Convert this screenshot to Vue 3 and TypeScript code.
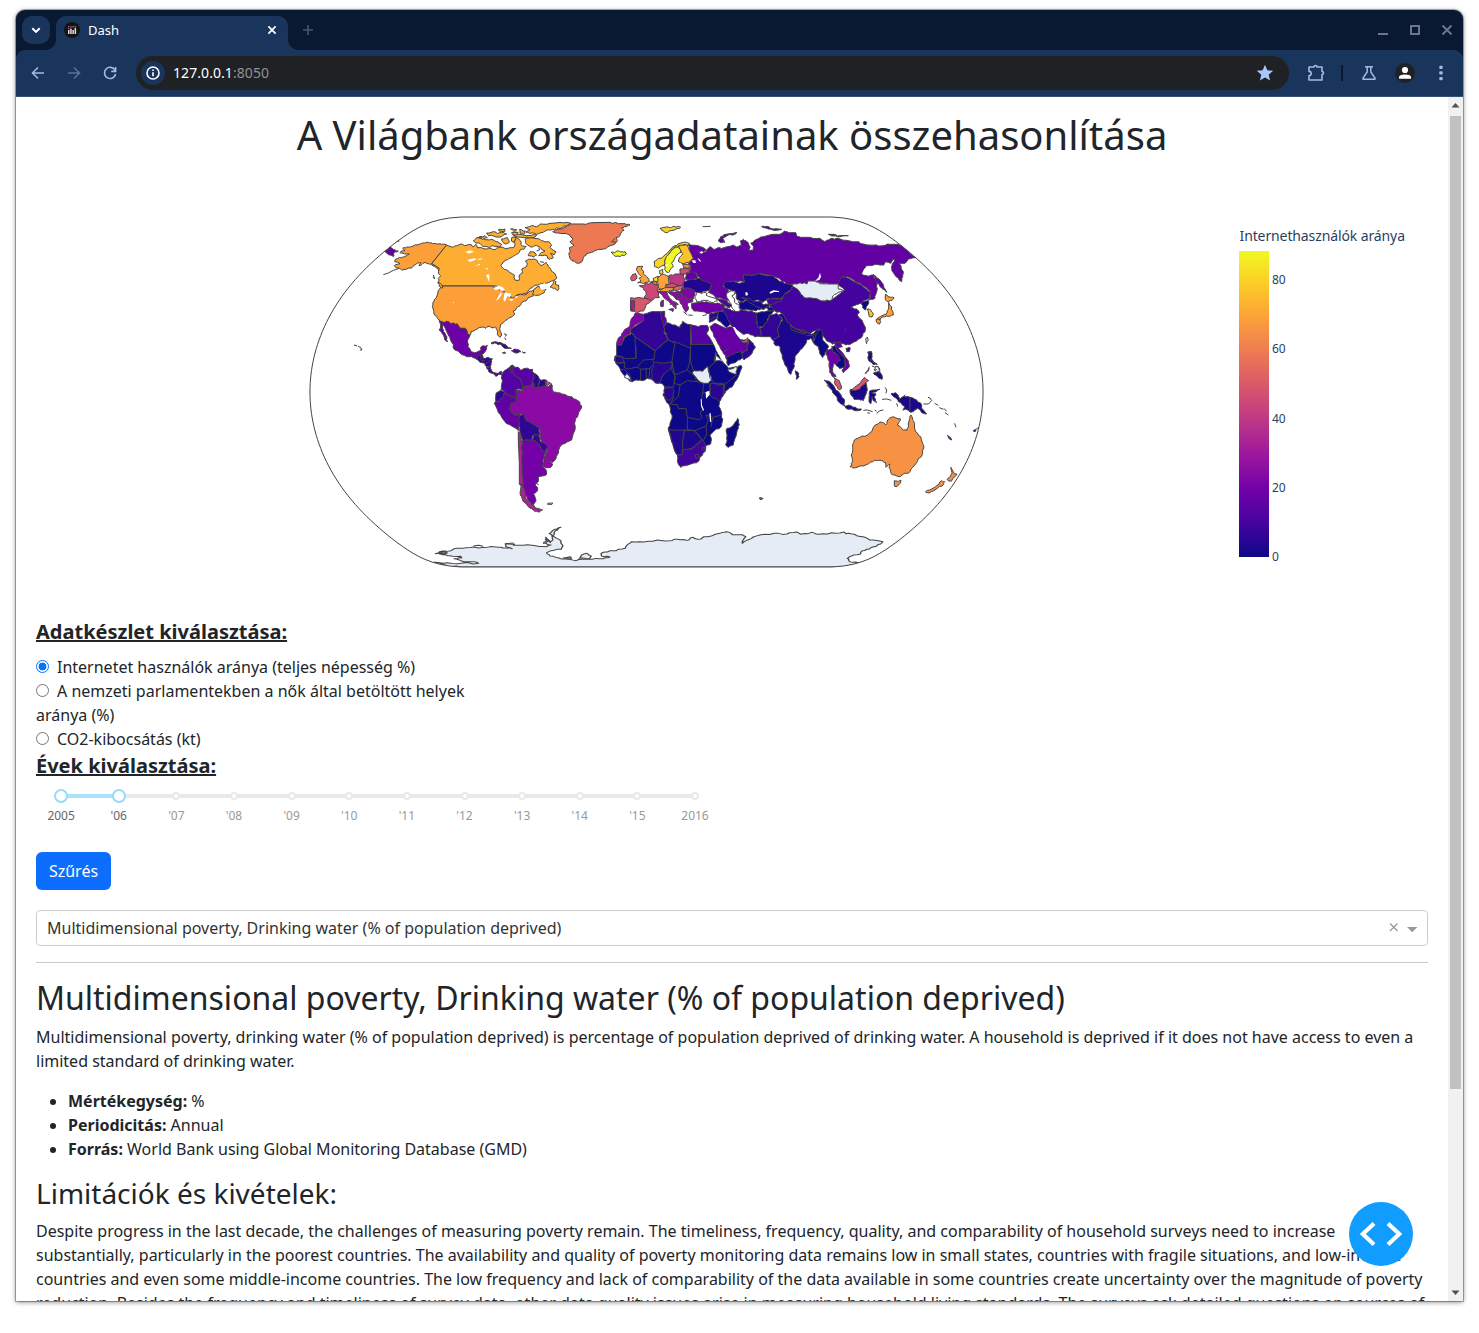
<script setup lang="ts">
interface Shape {
  f: string
  p: string
}
interface Layer {
  t: string
  shapes: Shape[]
  lines?: string[]
  water?: string[]
}

const NONE = '#e5ecf6'
const DARK = '#0d0887'

const americas: Layer = {
  t: 'translate(370 205) scale(.33333)',
  shapes: [
    { f: '#6200a4', p: '45,138 55,132 60,125 70,133 85,138 72,143 70,155 60,150 50,145' },
    { f: '#fc9f39', p: '230,120 185,176 194,180 208,186 210,200 203,192 195,184 182,178 165,172 156,178 147,182 153,173 140,176 130,184 110,192 96,196 88,190 78,188 73,182 90,176 84,172 74,170 76,163 95,158 105,154 118,147 104,147 90,143 93,139 105,137 98,130 110,126 122,125 133,121 145,118 158,114 175,112 188,116 200,117 215,118' },
    { f: '#fdae32', p: '230,120 245,126 260,122 275,117 288,122 300,118 310,125 318,118 322,128 335,128 348,132 360,130 372,134 385,128 397,126 405,131 415,130 430,128 436,120 431,110 440,98 447,103 452,108 455,122 468,124 462,133 450,135 445,145 436,150 428,155 415,162 405,166 398,174 393,182 400,190 412,196 425,205 433,210 432,218 436,226 447,226 448,210 457,204 455,192 468,186 472,178 466,168 475,163 488,162 500,165 505,175 513,182 522,178 528,172 535,185 545,198 557,210 560,220 545,228 530,234 515,236 497,240 480,250 470,265 455,269 440,270 428,280 415,272 405,262 400,250 365,243 215,243 208,236 205,220 212,212 205,205 208,190 194,180 185,176' },
    { f: '#fc9f39', p: '215,243 365,243 385,250 400,258 410,270 428,280 445,270 470,268 482,258 492,255 489,268 490,273 476,277 468,288 455,292 450,302 440,308 436,316 430,318 434,328 425,336 412,344 400,352 391,360 390,375 395,390 390,397 382,388 381,374 376,366 366,368 358,364 347,370 338,366 326,368 315,375 303,380 300,392 292,386 285,370 272,370 262,357 245,356 235,350 220,352 207,345 200,334 192,328 187,305 192,288 201,272 210,250' },
    { f: '#fdae32', p: '500,246 508,244 512,252 528,253 523,263 512,268 497,272 488,266 492,254' },
    { f: '#fdae32', p: '540,246 549,236 553,227 558,230 556,238 565,240 567,250 563,257 554,250' },
    { f: '#fdae32', p: '203,232 212,236 219,246 216,250 208,244' },
    { f: '#6e00a8', p: '207,347 220,352 235,350 245,356 262,357 272,370 285,370 292,386 300,392 293,405 294,425 303,440 320,442 330,437 335,424 352,421 347,437 338,447 326,452 320,462 305,455 290,455 270,444 252,432 247,415 235,390 225,368 218,358 220,375 227,390 232,411 224,404 218,388 208,376 212,366' },
    { f: '#3a049a', p: '318,462 326,450 336,447 340,460 355,457 367,461 363,475 362,488 348,484 344,475 330,472' },
    { f: '#5102a3', p: '350,486 362,488 366,499 380,505 394,499 396,508 386,508 378,514 370,506 356,500' },
    { f: '#3a049a', p: '363,415 375,410 390,412 405,418 416,428 424,430 404,430 395,420 380,416' },
    { f: '#5102a3', p: '424,437 436,432 447,435 453,440 438,444' },
    { f: '#444', p: '397,443 406,442 406,445' },
    { f: '#444', p: '457,441 466,442 464,445' },
    { f: '#fdae32', p: '465,68 485,62 500,65 512,57 540,55 570,52 603,55 590,63 566,70 548,73 530,75 520,82 500,88 485,84 468,82 480,74' },
    { f: '#fdae32', p: '430,92 450,88 480,92 500,90 495,96 478,100 455,97' },
    { f: '#fdae32', p: '465,103 485,98 505,101 520,108 536,110 545,120 540,127 558,140 552,150 541,145 550,158 540,163 525,150 506,152 515,142 525,138 510,126 494,122 482,126 470,118' },
    { f: '#fdae32', p: '480,140 492,142 500,150 490,156 475,152' },
    { f: '#fdae32', p: '310,108 320,98 333,94 345,104 365,103 378,110 395,118 390,126 368,122 355,127 338,124 330,115 318,114' },
    { f: '#fdae32', p: '325,98 345,92 352,98 338,103' },
    { f: '#fdae32', p: '395,102 412,98 418,112 408,118 399,112' },
    { f: '#fdae32', p: '425,98 438,96 432,112 424,108' },
    { f: '#fdae32', p: '350,84 370,80 383,86 400,82 410,87 395,95 370,93 355,92' },
    { f: '#fdae32', p: '385,75 405,72 404,80 390,79' },
    { f: '#fdae32', p: '422,72 440,74 436,79' },
    { f: '#fdae32', p: '425,82 445,82 440,90 428,89' },
    { f: '#fdae32', p: '448,74 466,78 462,88 450,84' },
    { f: '#ed7953', p: '548,80 560,74 578,70 590,64 602,57 640,57 665,53 720,52 745,56 765,56 780,60 768,65 755,68 762,76 753,84 748,94 738,98 742,106 734,118 720,122 700,132 680,135 665,142 650,146 640,158 634,172 626,175 607,168 600,160 597,148 600,136 598,128 608,124 612,120 600,110 608,104 600,92 590,86 565,84' },
    { f: '#f0f921', p: '723,142 734,143 741,138 752,141 765,140 769,147 750,155 733,152' }
  ],
  lines: [
    '88,190 70,196 55,204 40,209', '190,210 194,222 189,216', '402,386 410,390 405,394', '404,398 408,405', '80,110 88,108',
    '510,170 522,172', '332,448 334,468 345,466', '345,478 362,466', '735,100 725,110 738,112', '500,138 510,134 505,128'
  ],
  water: [
    '287,140 300,136 312,140 296,146', '292,165 315,159 318,164 300,171', '315,183 330,176 330,180', '320,162 340,160 330,165',
    '345,188 356,191 352,194', '348,210 358,208 358,232 352,218', '370,250 385,242 398,246 406,256 396,258 388,252 376,256',
    '392,262 396,268 386,282 378,288', '404,262 424,266 420,276 412,274 405,290 400,284', '414,284 432,280 426,288', '432,276 444,272 440,279', '248,292 253,291 251,295',
    '508,240 524,234 530,240 524,254 512,254'
  ]
}

const southAmerica: Layer = {
  t: 'translate(470 340) scale(.33333)',
  shapes: [
    { f: '#7301a8', p: '150,275 160,302 185,300 190,297 210,315 215,332 230,335 222,352 218,380 230,395 228,405 205,410 205,424 197,430 203,450 190,462 198,480 190,495 175,482 160,450 155,400 155,350 157,310' },
    { f: '#8b0aa5', p: '138,148 160,152 158,143 185,135 190,126 195,143 225,138 237,139 243,130 250,155 262,158 275,162 292,168 300,170 318,178 330,188 335,203 324,226 316,240 315,270 305,300 290,306 275,315 268,326 265,340 258,355 248,367 222,352 232,335 232,320 218,310 210,283 208,262 188,252 165,235 162,224 150,222 135,226 118,208 122,192 140,182' },
    { f: '#5502a4', p: '100,95 115,85 128,75 122,92 132,105 150,115 154,125 158,150 138,148 140,182 122,170 105,157 94,148 97,125 95,110' },
    { f: '#5b02a4', p: '128,75 134,82 145,82 150,90 165,85 188,88 187,96 195,103 188,125 185,135 158,143 154,125 150,115 132,105 122,92' },
    { f: '#2f0596', p: '193,100 208,116 205,143 195,143 187,125' },
    { f: '#2a0593', p: '208,118 228,120 225,138 207,143' },
    { f: '#d0506f', p: '228,120 241,129 228,138' },
    { f: '#2f0596', p: '78,160 92,150 105,157 100,170 85,187 77,181' },
    { f: '#6300a5', p: '105,157 122,170 135,168 140,181 122,192 118,208 135,226 150,222 147,260 145,272 125,258 105,245 92,225 78,200 73,190 78,182 85,187 100,170' },
    { f: '#2f0596', p: '148,228 162,224 165,235 188,252 208,262 210,285 190,285 185,300 160,302 150,275 147,258' },
    { f: '#35049a', p: '190,285 204,283 210,292 210,305 225,310 232,318 230,333 215,332 210,315 188,300' },
    { f: '#8b0aa5', p: '222,352 235,358 248,372 240,383 228,383 218,378' },
    { f: '#a92395', p: '145,275 150,280 157,310 155,350 157,400 158,440 166,455 168,475 175,484 190,497 200,505 218,510 205,516 190,510 175,500 160,485 151,465 153,440 148,430 148,370 145,300' }
  ],
  lines: ['232,490 248,489 246,493 232,493', '150,432 158,434', '128,75 130,98', '198,430 206,434', '188,490 194,500']
}

const africa: Layer = {
  t: 'translate(600 330) scale(.33333)',
  shapes: [
    { f: DARK, p: '95,8 105,20 165,62 205,28 272,43 340,43 345,50 352,66 362,85 376,103 385,115 405,112 424,107 426,112 415,140 400,165 385,178 370,195 360,210 357,225 362,240 365,255 367,275 362,292 345,300 330,315 334,330 332,342 318,348 290,380 240,380 232,375 222,355 215,335 205,300 210,280 216,265 211,245 208,225 198,212 190,197 195,180 193,170 185,160 165,158 155,147 142,145 125,152 110,150 95,155 78,143 62,122 52,105 43,92 50,75 50,45 65,45 75,20 90,15' },
    { f: '#7e03a8', p: '105,-50 118,-50 132,-45 131,-28 115,-20 90,-2 90,12 75,18 70,28 64,45 50,45 55,25 65,15 72,2 88,-10 92,-28' },
    { f: '#330597', p: '132,-48 155,-55 193,-55 187,-35 195,-10 193,10 205,28 165,62 105,20 92,8 92,-2 131,-28' },
    { f: '#5c01a6', p: '182,-53 194,-56 194,-40 199,-25 192,-8 185,-32' },
    { f: '#220690', p: '199,-22 218,-15 240,-8 248,-26 272,-16 272,55 225,35 205,30 193,5 192,-8' },
    { f: '#5302a3', p: '272,-16 295,-10 322,-14 325,2 320,12 340,43 275,43' },
    { f: NONE, p: '277,125 300,122 308,124 322,108 328,130 335,150 325,160 308,160 290,145' },
    { f: NONE, p: '347,68 352,80 365,88 378,103 360,92 344,95' },
    { f: NONE, p: '383,118 395,116 411,110 410,132 392,128' },
    { f: NONE, p: '72,140 80,130 90,142 97,155' },
    { f: '#270592', p: '162,97 190,98 218,97 210,118 197,128 185,140 180,157 165,158 155,147 157,115' },
    { f: '#270592', p: '195,174 215,172 222,185 218,200 205,212 190,197' },
    { f: '#270592', p: '45,78 65,82 72,95 60,100 48,98' },
    { f: '#2a0593', p: '332,160 370,160 370,195 358,215 330,195' },
    { f: '#230690', p: '205,297 230,300 262,300 252,305 248,345 245,375 232,375 222,355 215,335' },
    { f: '#1c068d', p: '252,302 285,302 300,322 305,328 275,355 248,362 248,340' },
    { f: '#41049d', p: '232,375 245,375 250,358 272,358 305,330 314,340 317,358 308,375 290,398 265,405 242,412 236,405' },
    { f: DARK, p: '413,265 418,285 412,300 405,325 400,345 385,352 377,343 380,325 379,297 392,292 402,282' }
  ],
  lines: [
    '105,20 108,85 78,86 60,78 48,78', '165,62 162,88 130,90 112,110 85,118 72,112', '205,30 225,40 218,80 215,97', '162,97 155,90',
    '272,55 268,100 262,120 225,135 215,97', '272,55 272,95 280,122', '218,97 215,120 226,140 220,172 193,170', '225,138 222,160 240,165 262,152 292,155 312,160',
    '262,120 285,140 290,155', '240,165 235,200 210,222 222,200', '210,222 232,224 236,236 258,235 262,262 298,270 306,262 300,245 312,240', '262,262 262,298 285,302 318,288 325,270 318,255 338,262 365,255',
    '285,302 300,322 310,332 320,312 318,288', '312,160 306,200 304,215', '330,160 330,185 305,190', '350,165 330,145 326,115 345,95 348,70',
    '350,165 375,163 410,135', '375,163 370,195', '285,375 293,372 297,380 288,386 285,375', '306,352 313,352 312,361 305,359 306,352',
    '95,155 90,135 75,120', '122,150 122,118', '140,145 138,115', '147,145 150,115', '112,112 125,118 150,115 157,105', '55,98 75,98 72,112', '60,120 75,118',
    '108,50 108,85', '338,262 333,290', '366,85 376,103'
  ],
  water: ['317,186 328,182 329,194 318,206', '302,208 305,208 306,225 312,240 309,242 303,228', '328,250 332,250 334,276 330,275', '325,5 330,5 345,35 362,60 378,95 382,103 376,103 362,85 350,62 342,42']
}

const eurasia: Layer = {
  t: 'translate(600 205) scale(.33333)',
  shapes: [
    { f: '#6200a4', p: '265,118 285,121 300,125 318,134 312,140 292,138 305,147 318,140 330,125 340,133 350,130 372,128 400,120 410,126 424,122 421,108 430,103 441,110 450,125 447,135 458,136 462,125 452,115 470,103 490,95 520,88 540,88 553,78 566,83 587,83 590,92 602,97 630,97 660,100 675,110 690,102 710,100 740,106 770,110 790,117 830,120 850,122 870,118 895,118 910,122 925,137 945,158 925,162 915,175 897,175 910,200 908,215 905,230 888,215 875,195 876,182 885,165 878,163 872,175 855,171 852,180 840,180 825,178 800,182 793,190 785,207 800,212 820,210 832,235 830,260 825,280 808,283 812,262 805,255 780,235 750,218 728,215 722,228 720,237 690,237 660,232 625,228 620,237 600,235 580,240 560,235 540,222 520,212 475,205 455,212 430,208 435,230 400,228 372,235 370,245 385,255 380,268 388,287 365,280 345,275 325,262 335,240 300,225 290,205 268,200 272,185 265,175 280,160 270,140' },
    { f: '#6200a4', p: '355,108 362,95 378,88 410,82 408,86 380,93 368,102 375,112 362,113' },
    { f: '#6200a4', p: '485,65 500,64 520,72 545,73 530,76 505,72' },
    { f: '#6200a4', p: '685,88 700,88 720,92 745,92 720,95 700,93' },
    { f: '#6200a4', p: '820,208 830,218 845,232 852,248 860,262 848,252 838,240 826,222' },
    { f: '#fbd324', p: '162,170 175,160 190,155 205,140 225,122 240,115 250,112 268,115 265,122 252,118 240,124 225,126 215,135 205,150 195,165 193,180 185,183 175,190 163,184' },
    { f: '#f0f724', p: '215,135 228,126 240,130 243,142 230,150 222,165 215,175 220,185 212,192 205,203 198,200 193,180 195,165' },
    { f: '#fdc229', p: '236,122 262,120 266,130 270,140 280,160 265,172 245,175 235,168 238,158 248,146 243,138' },
    { f: '#f7d024', p: '180,70 195,67 212,68 222,64 242,67 228,72 210,77 202,83 190,78' },
    { f: '#fba238', p: '112,185 128,184 124,192 131,200 130,206 140,215 148,230 130,236 113,234 122,228 117,220 125,215 115,205 110,196' },
    { f: '#d8576b', p: '92,217 98,208 107,205 111,215 106,225 95,227' },
    { f: '#cc4778', p: '118,242 132,242 136,235 145,237 158,230 178,243 172,258 178,278 165,278 155,286 133,280 138,262 130,250' },
    { f: '#d8576b', p: '92,278 130,280 155,287 140,297 135,310 130,318 110,324 103,318 92,318' },
    { f: '#a51f99', p: '93,288 103,286 104,300 102,318 92,316' },
    { f: '#fba238', p: '175,215 188,208 205,213 208,238 196,244 201,252 178,252 173,232' },
    { f: '#fbd324', p: '178,197 188,192 189,203 185,208 179,206' },
    { f: '#f8df25', p: '160,220 174,214 172,230 160,229' },
    { f: '#f58c46', p: '152,231 168,230 172,240 162,238' },
    { f: '#be3885', p: '206,213 225,207 250,207 256,235 240,243 210,236' },
    { f: '#d0506f', p: '196,240 215,235 236,241 222,248 202,248' },
    { f: '#fba238', p: '172,256 188,252 205,248 222,248 218,256 200,260 174,262' },
    { f: '#f1844b', p: '248,178 267,178 268,190 250,188' },
    { f: '#d0506f', p: '240,192 268,190 270,200 255,207 240,205' },
    { f: '#6200a4', p: '258,205 275,200 288,205 295,220 275,226 255,222' },
    { f: '#220690', p: '252,230 265,225 298,220 312,228 335,240 330,255 310,258 300,266 285,260 270,252 250,248' },
    { f: '#e26660', p: '222,248 246,242 248,250 232,256 220,256' },
    { f: '#7e03a8', p: '246,252 262,248 280,255 285,270 280,280 262,282 248,272 240,262' },
    { f: '#8b0aa5', p: '205,262 235,258 248,272 262,282 280,280 278,290 262,296 266,310 258,322 248,305 240,290 225,278' },
    { f: '#9613a1', p: '174,262 200,260 202,270 212,282 235,298 228,300 228,312 218,300 200,285 188,272' },
    { f: '#9613a1', p: '184,288 190,285 190,304 183,305' },
    { f: '#9613a1', p: '206,314 222,312 218,320' },
    { f: '#6e00a8', p: '275,295 300,292 320,290 345,296 372,295 374,318 350,320 330,325 305,320 282,318 275,308' },
    { f: '#5002a2', p: '345,278 380,287 396,302 388,308 370,302 360,290' },
    { f: '#2a0593', p: '330,325 355,320 352,340 340,348 328,352' },
    { f: '#0f0787', p: '355,322 370,318 380,328 385,345 395,358 380,368 352,345' },
    { f: '#6600a6', p: '330,365 345,355 378,370 396,366 410,385 425,400 443,412 440,436 415,445 395,448 378,460 368,440 355,418 342,395' },
    { f: '#0f0787', p: '378,458 395,448 415,442 425,440 432,458 415,465 385,482' },
    { f: '#2c0594', p: '445,402 455,412 466,425 458,440 450,452 432,465 425,442 442,436' },
    { f: '#d8576b', p: '422,407 434,408 443,398 441,412 425,411' },
    { f: '#41049d', p: '368,308 385,312 400,318 425,314 455,318 475,325 470,355 478,368 485,395 465,396 445,385 430,388 412,375 398,365 385,345 378,330' },
    { f: '#1d068e', p: '370,240 378,230 400,228 418,235 435,230 430,208 455,212 475,205 500,212 520,212 540,230 560,235 580,240 568,258 555,265 545,280 520,280 500,282 490,292 475,285 455,290 440,280 425,290 412,285 405,262 390,255 375,250' },
    { f: DARK, p: '415,290 430,292 440,284 460,298 485,310 468,318 450,315 420,312' },
    { f: '#1d068e', p: '425,278 442,280 460,290 478,288 492,300 510,295 505,308 485,312 462,300' },
    { f: '#4a02a0', p: '500,283 520,280 548,284 540,292 520,298 505,300' },
    { f: '#0f0787', p: '468,325 485,320 510,318 525,316 508,330 502,350 490,366 474,368' },
    { f: '#0d0887', p: '500,305 520,304 530,314 505,318' },
    { f: '#330597', p: '478,368 490,366 502,350 510,330 530,325 545,342 533,372 538,395 520,406 510,395 485,395' },
    { f: '#44039e', p: '568,260 580,236 600,262 640,280 675,288 695,285 735,255 715,240 725,215 750,222 780,238 805,258 812,262 808,280 785,292 775,298 762,302 752,308 770,312 778,322 772,330 790,355 796,372 788,392 770,408 750,418 738,420 728,416 710,412 698,418 680,408 665,390 658,372 632,385 610,382 580,370 558,345 545,325 525,318 510,300 545,288 550,272' },
    { f: NONE, p: '575,240 600,233 620,237 625,228 645,228 660,236 690,237 716,237 715,252 735,255 715,262 700,272 695,285 675,288 640,280 612,278 600,262' },
    { f: DARK, p: '785,293 800,288 808,283 803,300 798,315 788,308' },
    { f: '#fcc427', p: '802,312 812,314 820,328 816,336 808,335' },
    { f: '#fc9f39', p: '856,268 870,276 882,278 876,286 862,290 856,284' },
    { f: '#fc9f39', p: '866,292 875,305 880,330 866,334 848,336 838,346 832,340 845,332 858,328 866,312' },
    { f: '#fc9f39', p: '828,344 838,342 842,350 838,358 830,352' },
    { f: '#1b068d', p: '545,325 558,345 575,365 610,382 635,388 658,372 652,390 640,412 632,400 620,405 618,415 600,435 585,455 583,485 573,508 565,500 552,470 542,440 540,425 525,420 520,406 538,395 533,372 548,345 535,330' },
    { f: '#1b068d', p: '586,497 594,502 597,515 589,523' },
    { f: DARK, p: '650,385 660,372 668,385 668,405 685,422 682,435 675,445 668,458 660,448 655,425 640,412' },
    { f: '#6e00a8', p: '680,435 695,430 705,445 722,445 725,460 712,478 700,475 698,500 708,515 700,512 690,495 688,470 678,448' },
    { f: DARK, p: '695,425 708,420 722,440 735,458 735,485 718,490 708,478 722,465 712,448 698,440' },
    { f: '#6300a5', p: '700,412 722,410 727,425 715,430 735,455 746,468 748,485 730,503 726,495 738,482 735,462 712,438' },
    { f: '#44039e', p: '738,430 750,428 748,440 740,440' },
    { f: NONE, p: '797,402 802,396 804,402 800,416' },
    { f: '#23068f', p: '805,440 815,440 812,460 825,474 832,478 820,472 808,465' },
    { f: '#23068f', p: '825,505 838,498 846,510 845,522 834,515' },
    { f: '#fff', p: '285,275 293,262 305,266 315,262 322,266 318,270 345,280 352,288 335,292 318,286 290,290' },
    { f: '#fff', p: '379,268 390,258 406,258 404,268 396,272 404,285 404,292 418,302 420,318 408,320 397,310 392,295 384,282' }
  ],
  lines: [
    '308,65 332,64', '265,330 278,331', '308,332 320,329', '825,485 835,485 838,497', '822,492 828,500', '808,485 804,495 795,505', '735,375 737,370',
    '572,362 590,372 618,378 616,388 594,382 573,374 572,362', '620,392 640,390 640,412', '225,278 238,266 250,274', '240,290 252,284', '360,290 388,308',
    '210,300 214,294', '250,320 262,330', '345,335 330,345', '388,430 372,440', '640,390 650,385', '205,262 220,256', '243,258 230,276'
  ],
  water: [
    '436,262 442,262 444,270 437,272', '275,166 286,166 288,174 280,174', '292,158 298,162 304,170 298,168',
    '508,262 520,256 537,258 537,261 522,261 512,266', '660,203 663,215 658,225 645,228 655,218', '197,180 204,178 200,186',
    '399,366 404,366 415,380 428,392 442,386 445,392 440,400 432,404 420,402 408,386'
  ]
}

const oceania: Layer = {
  t: 'translate(780 340) scale(.33333)',
  shapes: [
    { f: '#5c01a6', p: '148,92 155,96 162,112 156,108' },
    { f: '#d8576b', p: '162,113 178,122 185,145 178,150 166,135' },
    { f: '#1d068e', p: '132,120 148,124 165,145 178,158 193,178 192,195 180,190 165,165 150,145' },
    { f: '#1d068e', p: '190,195 215,198 230,205 245,208 235,212 205,208' },
    { f: '#1d068e', p: '211,148 220,150 232,148 248,136 258,128 262,150 255,168 250,182 238,178 222,178 213,165' },
    { f: '#d8576b', p: '213,150 225,140 238,132 248,118 254,112 266,122 258,128 248,136 238,148 222,152' },
    { f: '#1d068e', p: '268,165 270,152 284,150 300,148 288,156 275,158 288,162 282,172 290,188 280,182 276,170 272,192 267,185' },
    { f: '#1d068e', p: '333,162 345,158 355,166 358,178 372,168 390,172 390,216 378,207 368,210 375,200 355,185 348,174' },
    { f: '#1d068e', p: '390,172 410,180 425,195 425,205 440,222 425,218 412,205 400,215 390,216' },
    { f: '#f79144', p: '215,375 217,360 214,345 218,320 223,300 240,292 262,285 275,275 280,262 300,246 310,248 317,255 325,238 340,230 362,237 356,248 352,255 368,268 380,272 386,258 388,240 393,225 398,240 404,250 407,275 422,290 432,320 428,340 412,365 398,382 385,400 370,402 358,410 345,405 335,403 332,390 328,385 330,372 318,382 316,368 305,362 290,361 272,366 252,377 240,378 222,384 210,380' },
    { f: '#f79144', p: '343,422 352,424 363,421 358,433 348,440 343,438' },
    { f: '#f79144', p: '437,455 455,447 470,437 485,422 494,425 490,434 475,442 465,450 450,458 440,459' },
    { f: '#f79144', p: '501,418 512,408 516,398 513,382 520,396 524,402 531,402 522,412 514,424 505,422' },
    { f: '#1d068e', p: '263,37 274,36 276,48 272,62 282,68 290,72 280,74 266,62' },
    { f: '#1d068e', p: '280,100 292,95 304,102 306,118 296,114 290,106' },
    { f: '#7e03a8', p: '502,286 508,290 515,300 510,298' },
    { f: '#2c0594', p: '580,272 586,268 588,273 582,275' }
  ],
  lines: [
    '250,211 262,210 278,215', '262,218 270,220', '290,220 300,212 310,210', '284,210 290,214', '315,142 320,150 318,160', '306,178 320,177 334,181',
    '350,190 353,200', '430,192 445,192 455,182 450,174 444,172', '464,190 475,196', '478,203 490,208', '492,205 500,214', '495,218 505,225', '524,250 528,262',
    '588,268 597,262', '276,78 286,82 284,92', '290,78 298,84 300,92', '268,85 264,94 256,102', '140,135 150,145', '286,88 292,90', '370,170 376,164'
  ]
}

const antarctica: Layer = {
  t: 'translate(300 480) scale(.44667 .33333)',
  shapes: [
    { f: NONE, p: '360,261 330,258 300,247 330,248 365,249 400,250 385,245 360,242 345,236 362,234 360,229 335,227 320,224 303,221 330,219 312,215 338,212 345,206 365,205 390,201 420,202 440,201 455,204 475,206 460,198 462,190 480,192 478,196 500,196 530,198 550,200 562,195 545,190 552,180 550,172 560,188 566,180 564,165 558,160 570,148 584,142 572,152 566,168 580,178 588,195 585,208 562,212 552,218 560,228 580,234 600,238 618,242 640,238 655,238 680,236 694,231 675,228 674,220 688,216 708,212 728,205 732,196 742,185 770,186 800,180 828,182 845,178 865,181 880,172 890,178 912,170 940,160 955,155 968,164 990,164 998,170 990,190 1010,176 1030,165 1062,160 1090,162 1112,156 1122,163 1145,157 1162,163 1190,158 1218,156 1222,161 1240,163 1250,168 1262,171 1275,180 1305,185 1300,192 1285,200 1268,208 1256,216 1254,223 1235,228 1225,235 1232,246 1250,249 1230,256 1195,261' },
    { f: NONE, p: '625,235 630,225 642,220 652,228 648,236' }
  ],
  lines: ['588,235 605,230 608,235 588,235', '550,188 558,182 548,178', '388,198 400,196 410,199', '458,192 478,189', '1030,52 1036,55 1032,59 1029,55 1030,52']
}

// Breaks long coast segments with a small offset. The offset depends only on
// the two end points, so neighbouring countries keep a common border.
function rough(points: string): string {
  const pts = points.split(' ').map((s) => s.split(',').map(Number))
  const out: string[] = []
  pts.forEach((a, i) => {
    out.push(a.join(','))
    const b = pts[(i + 1) % pts.length]
    const flip = a[0] > b[0] || (a[0] === b[0] && a[1] > b[1])
    const [s, e] = flip ? [b, a] : [a, b]
    const dx = e[0] - s[0]
    const dy = e[1] - s[1]
    const len = Math.hypot(dx, dy)
    if (len < 9 || len > 45 || dx === 0 || dy === 0) return
    const extra: string[] = []
    for (const t of [0.3, 0.65]) {
      const seed = Math.sin(s[0] * 12.9898 + s[1] * 78.233 + e[0] * 37.719 + e[1] * 4.581 + t * 91.7) * 43758.5453
      const r = (seed - Math.floor(seed) - 0.5) * Math.min(5, len * 0.24)
      extra.push(`${(s[0] + dx * t - (dy / len) * r).toFixed(1)},${(s[1] + dy * t + (dx / len) * r).toFixed(1)}`)
    }
    if (flip) extra.reverse()
    out.push(...extra)
  })
  return out.join(' ')
}

const layers: Layer[] = [americas, southAmerica, africa, eurasia, oceania, antarctica].map((l) => ({
  ...l,
  shapes: l.shapes.map((s) => ({ f: s.f, p: rough(s.p) }))
}))

// Sphere outline in the Natural Earth projection
const CX = 646.5
const CY = 392
const K = 123.03
function edge(deg: number, side: number): string {
  const p = (deg * Math.PI) / 180
  const p2 = p * p
  const l = 0.8707 - 0.131979 * p2 - 0.013791 * p2 ** 2 + 0.003971 * p2 ** 5 - 0.001529 * p2 ** 6
  const y = p * (1.007226 + 0.015085 * p2 - 0.044475 * p2 ** 3 + 0.028874 * p2 ** 4 - 0.005916 * p2 ** 5)
  return `${(CX + side * Math.PI * l * K).toFixed(2)},${(CY - y * K).toFixed(2)}`
}
const sphere: string[] = []
for (let d = -90; d <= 90; d += 2) sphere.push(edge(d, -1))
for (let d = 90; d >= -90; d -= 2) sphere.push(edge(d, 1))
const spherePoints = sphere.join(' ')

const scale = ['#f0f921', '#fdca26', '#fb9f3a', '#ed7953', '#d8576b', '#bd3786', '#9c179e', '#7201a8', '#46039f', '#0d0887']
const ticks = [
  { v: 80, y: 284 },
  { v: 60, y: 353 },
  { v: 40, y: 423 },
  { v: 20, y: 492 },
  { v: 0, y: 561 }
]

const datasets = [
  'Internetet használók aránya (teljes népesség %)',
  'A nemzeti parlamentekben a nők által betöltött helyek aránya (%)',
  'CO2-kibocsátás (kt)'
]
const years = ['2005', "'06", "'07", "'08", "'09", "'10", "'11", "'12", "'13", "'14", "'15", '2016']
</script>

<template>
  <div class="desktop">
    <div class="window">
      <div class="tabs">
        <div class="tabsearch">
          <svg width="28" height="28"><path d="M10.3 12.2l3.7 3.7 3.7-3.7" fill="none" stroke="#fff" stroke-width="2" /></svg>
        </div>
        <div class="tab">
          <svg class="fav" width="16" height="16">
            <circle cx="8" cy="8" r="8" fill="#141414" />
            <g fill="#ddd"><rect x="4" y="8" width="1.5" height="4" /><rect x="6.2" y="6.6" width="1.5" height="5.4" /><rect x="8.4" y="8" width="1.5" height="4" /><rect x="10.6" y="6" width="1.5" height="6" /></g>
            <g fill="#a4487c"><rect x="4" y="4" width="1.5" height="1.4" /><rect x="4" y="6" width="1.5" height="1.2" /><rect x="6.2" y="4" width="1.5" height="1.4" /></g>
            <g fill="#777"><rect x="8.4" y="4" width="1.5" height="1.4" /><rect x="10.6" y="4" width="1.5" height="1.4" /></g>
          </svg>
          <span class="tabname">Dash</span>
          <svg width="10" height="10"><path d="M1.4 1.4l7.2 7.2M8.6 1.4L1.4 8.6" stroke="#fff" stroke-width="1.8" /></svg>
        </div>
        <svg class="plus" width="12" height="12"><path d="M6 1v10M1 6h10" stroke="#46566f" stroke-width="1.6" /></svg>
        <div class="wincontrols">
          <svg width="12" height="12"><path d="M1 10h10" stroke="#6c7686" stroke-width="2" /></svg>
          <svg width="12" height="12"><rect x="2" y="2" width="8" height="8" fill="none" stroke="#6c7686" stroke-width="2" /></svg>
          <svg width="12" height="12"><path d="M1.5 1.5l9 9M10.5 1.5l-9 9" stroke="#6c7686" stroke-width="2" /></svg>
        </div>
      </div>
      <div class="toolbar">
        <svg class="nav" width="16" height="16"><path d="M14 8H3M8 2.5L2.5 8 8 13.5" fill="none" stroke="#a4bbdf" stroke-width="1.6" /></svg>
        <svg class="nav" width="16" height="16"><path d="M2 8h11M8 2.5L13.5 8 8 13.5" fill="none" stroke="#55719c" stroke-width="1.6" /></svg>
        <svg class="nav" width="16" height="16"><path d="M13 5.2A5.6 5.6 0 1 0 13.6 9M13.6 2v4.4H9.2" fill="none" stroke="#a4bbdf" stroke-width="1.6" /></svg>
        <div class="omnibox">
          <div class="info">
            <svg width="24" height="24"><circle cx="12" cy="12" r="6" fill="none" stroke="#fff" stroke-width="1.6" /><path d="M12 11.2v4M12 8.4v1.5" stroke="#fff" stroke-width="1.6" /></svg>
          </div>
          <span class="url">127.0.0.1<i>:8050</i></span>
          <svg width="18" height="18"><path d="M9 .8l2.3 5.5 5.9.5-4.5 3.9 1.4 5.8L9 13.4l-5.1 3.1 1.4-5.8L.8 6.8l5.9-.5z" fill="#a8c7fa" /></svg>
        </div>
        <div class="actions">
          <svg width="20" height="20" viewBox="0 0 20 20"><path d="M3 4h5a1.500 1.500 0 0 1 3 0h5v4.500a1.500 1.500 0 0 1 0 3V17H3v-4.300a2.100 2.100 0 0 0 0-4.300z" fill="none" stroke="#a4bbdf" stroke-width="1.6" stroke-linejoin="round" /></svg>
          <span class="bar"></span>
          <svg class="flask" width="16" height="16"><path d="M4 1.800h8M6.200 2v5L2 13.200q-.4 1 .7 1h10.600q1.100 0 .7-1L9.800 7V2" fill="none" stroke="#a4bbdf" stroke-width="1.500" /></svg>
          <svg class="avatar" width="20" height="20"><circle cx="10" cy="10" r="10" fill="#202124" /><circle cx="10" cy="7" r="3.100" fill="#fff" /><path d="M4 15.800v-1.600q0-2.800 6-2.800t6 2.800v1.600z" fill="#fff" /></svg>
          <svg class="dots" width="4" height="16" fill="#a4bbdf"><rect x=".3" y=".7" width="3.400" height="3.200" rx="1" /><rect x=".3" y="6.300" width="3.400" height="3.200" rx="1" /><rect x=".3" y="12" width="3.400" height="3.200" rx="1" /></svg>
        </div>
      </div>
      <div class="view">
        <main class="page">
          <h1>A Világbank országadatainak összehasonlítása</h1>
          <svg class="graph" width="1392" height="450" viewBox="36 167 1392 450">
            <defs>
              <linearGradient id="plasma" x1="0" y1="0" x2="0" y2="1">
                <stop v-for="(c, i) in scale" :key="c" :offset="i / 9" :stop-color="c" />
              </linearGradient>
              <clipPath id="globe"><polygon :points="spherePoints" /></clipPath>
            </defs>
            <g clip-path="url(#globe)">
              <g v-for="(l, i) in layers" :key="i" :transform="l.t">
                <polygon v-for="(s, j) in l.shapes" :key="j" class="land" :points="s.p" :fill="s.f" />
                <polyline v-for="(s, j) in l.lines" :key="'l' + j" class="land" :points="s" fill="none" />
                <polygon v-for="(s, j) in l.water" :key="'w' + j" :points="s" fill="#fff" />
              </g>
              <path class="land" d="M354 345l3 1M358 346l3 2 1 2-2 0" fill="none" />
            </g>
            <polygon :points="spherePoints" fill="none" stroke="#444" stroke-width="1" />
            <text class="cbtitle" x="1239.500" y="241" textLength="165.500">Internethasználók aránya</text>
            <rect x="1239" y="251" width="30" height="306" fill="url(#plasma)" />
            <text v-for="t in ticks" :key="t.v" class="tick" x="1272" :y="t.y">{{ t.v }}</text>
          </svg>
          <div class="controls">
            <h5>Adatkészlet kiválasztása:</h5>
            <div class="radios">
              <label v-for="(d, i) in datasets" :key="d"><span class="radio" :class="{ on: i === 0 }"></span>{{ d }}</label>
            </div>
            <h5>Évek kiválasztása:</h5>
            <div class="slider">
              <div v-for="(y, i) in years" :key="y" class="stop" :class="{ active: i < 2, first: i === 0, last: i === 11 }">
                <div class="rail"><span class="dot"></span></div>
                <span class="year">{{ y }}</span>
              </div>
            </div>
            <button>Szűrés</button>
          </div>
          <div class="select">
            <span>Multidimensional poverty, Drinking water (% of population deprived)</span>
            <svg width="32" height="16"><path d="M2 3.500l7.500 7.500M9.500 3.500L2 11" stroke="#999" stroke-width="1.300" /><path d="M19 7h10.400L24.200 12.200z" fill="#999" /></svg>
          </div>
          <hr />
          <h2>Multidimensional poverty, Drinking water (% of population deprived)</h2>
          <p>Multidimensional poverty, drinking water (% of population deprived) is percentage of population deprived of drinking water. A household is deprived if it does not have access to even a limited standard of drinking water.</p>
          <ul>
            <li><b>Mértékegység:</b> %</li>
            <li><b>Periodicitás:</b> Annual</li>
            <li><b>Forrás:</b> World Bank using Global Monitoring Database (GMD)</li>
          </ul>
          <h3>Limitációk és kivételek:</h3>
          <p>Despite progress in the last decade, the challenges of measuring poverty remain. The timeliness, frequency, quality, and comparability of household surveys need to increase substantially, particularly in the poorest countries. The availability and quality of poverty monitoring data remains low in small states, countries with fragile situations, and low-income countries and even some middle-income countries. The low frequency and lack of comparability of the data available in some countries create uncertainty over the magnitude of poverty reduction. Besides the frequency and timeliness of survey data, other data quality issues arise in measuring household living standards. The surveys ask detailed questions on sources of</p>
        </main>
        <div class="scrollbar">
          <svg width="15" height="19"><path d="M3.500 10.500L7.500 6l4 4.500z" fill="#505050" /></svg>
          <div class="thumb"></div>
          <svg class="down" width="15" height="17"><path d="M3.500 6.500h8l-4 4.500z" fill="#505050" /></svg>
        </div>
        <div class="debug">
          <svg width="64" height="64"><path d="M25 21.500L13.800 32 25 42.500M39 21.500L50.200 32 39 42.500" fill="none" stroke="#fff" stroke-width="4.200" /></svg>
        </div>
      </div>
    </div>
  </div>
</template>

<style>
body { margin: 0; background: #fff; }
</style>

<style scoped>
* { box-sizing: border-box; }
.desktop { width: 1479px; height: 1333px; padding: 10px 16px; background: #fff; overflow: hidden; font: 16px/24px "Noto Sans", "Open Sans", sans-serif; color: #212529; }
.window { width: 1447px; height: 1291px; border-radius: 9px 9px 0 0; background: #081931; overflow: hidden; box-shadow: 0 0 0 1px rgba(0, 0, 0, .28), 0 1px 5px rgba(0, 0, 0, .5); }
.tabs { height: 40px; display: flex; align-items: center; }
.tabsearch { width: 28px; height: 28px; margin-left: 6px; border-radius: 10px; background: #1a355c; }
.tab { position: relative; align-self: flex-end; height: 34px; width: 232px; margin-left: 6px; padding: 0 11px 6px 8px; border-radius: 10px 10px 0 0; background: #1a355c; display: flex; align-items: center; color: #fff; font-size: 13px; }
.tab::before, .tab::after { content: ""; position: absolute; bottom: 0; width: 10px; height: 10px; }
.tab::before { left: -10px; background: radial-gradient(circle at 0 0, transparent 9.500px, #1a355c 10px); }
.tab::after { right: -10px; background: radial-gradient(circle at 100% 0, transparent 9.500px, #1a355c 10px); }
.tabname { margin-left: 8px; flex: 1; }
.plus { margin-left: 14px; }
.wincontrols { margin-left: auto; margin-right: 10px; display: flex; gap: 20px; }
.toolbar { height: 47px; border-radius: 9px 9px 0 0; background: #1a355c; border-bottom: 1px solid #35507a; display: flex; align-items: center; padding-left: 14px; }
.nav { margin-right: 20px; }
.omnibox { width: 1153px; height: 34px; margin-left: -2px; border-radius: 17px; background: #202124; display: flex; align-items: center; padding: 0 15px 0 5px; }
.info { width: 24px; height: 24px; border-radius: 12px; background: #1a355c; }
.url { flex: 1; margin-left: 8px; color: #fff; font-size: 14px; letter-spacing: .07px; }
.url i { font-style: normal; color: #8f9195; }
.actions { display: flex; align-items: center; margin-left: 17px; }
.bar { width: 2px; height: 16px; margin-left: 15px; background: #081931; }
.flask { margin-left: 18px; }
.avatar { margin-left: 18px; }
.dots { margin-left: 24px; }
.view { position: relative; height: 1204px; background: #fff; display: flex; overflow: hidden; }
.page { width: 1432px; padding: 14px 20px 0; }
h1, h2, h3, h5 { margin: 0; font-weight: 400; }
h1 { font-size: 40px; line-height: 48px; margin-bottom: 8px; text-align: center; }
.graph { display: block; }
.land { stroke: #444; stroke-width: 3; stroke-linejoin: round; }
path.land { stroke-width: 1; }
.cbtitle { font-size: 14px; fill: #2a3f5f; }
.tick { font-size: 12px; fill: #2a3f5f; }
.controls { padding-top: 3px; display: flex; flex-direction: column; align-items: flex-start; }
h5 { font-size: 20px; line-height: 24px; font-weight: 700; text-decoration: underline; }
.radios { width: 452px; margin: 11px 0 3px; }
label { display: block; }
.radio { display: inline-block; width: 13px; height: 13px; margin-right: 8px; border: 1px solid #767676; border-radius: 50%; background: #fff; }
.radio.on { border: 1.500px solid #0075ff; background: radial-gradient(circle, #0075ff 3.700px, #fff 4.200px); }
.slider { display: flex; margin: 11px 0 0 -3.700px; }
.stop { width: 57.640px; flex: none; display: flex; flex-direction: column; align-items: center; font-size: 12px; color: #999; }
.rail { width: 100%; height: 14px; display: flex; align-items: center; justify-content: center; background: linear-gradient(#e9e9e9, #e9e9e9) 0 5px / 100% 4px no-repeat; }
.dot { width: 8px; height: 8px; border: 2px solid #e9e9e9; border-radius: 50%; background: #fff; }
.stop.active { color: #666; }
.active .dot { width: 14px; height: 14px; border: 2px solid #96dbfa; }
.first .rail { background: linear-gradient(#abe2fb, #abe2fb) 100% 5px / 50% 4px no-repeat; }
.stop:nth-child(2) .rail { background: linear-gradient(90deg, #abe2fb 50%, #e9e9e9 50%) 0 5px / 100% 4px no-repeat; }
.last .rail { background: linear-gradient(#e9e9e9, #e9e9e9) 0 5px / 50% 4px no-repeat; }
.year { line-height: 18px; margin-top: 4px; }
button { width: 75px; height: 38px; margin-top: 27px; padding: 0; border: 0; border-radius: 6px; background: #0d6efd; color: #fff; font: inherit; }
.select { height: 36px; margin-top: 20px; padding: 0 7px 0 10px; border: 1px solid #ccc; border-radius: 4px; display: flex; align-items: center; justify-content: space-between; color: #333; }
hr { margin: 16px 0; border: 0; border-top: 1px solid #c8c9ca; }
h2 { font-size: 32px; line-height: 38.400px; margin-bottom: 8px; }
h3 { font-size: 28px; line-height: 33.600px; margin-bottom: 8px; }
p { margin: 0 0 16px; }
ul { margin: 0 0 16px; padding-left: 32px; }
.scrollbar { width: 15px; background: #f1f1f1; display: flex; flex-direction: column; }
.scrollbar svg { display: block; flex: none; }
.thumb { width: 11px; height: 973px; margin-left: 2px; background: #c1c1c1; }
.down { margin-top: auto; }
.debug { position: absolute; left: 1333px; top: 1105px; width: 64px; height: 64px; border-radius: 50%; background: #119dff; }
</style>
